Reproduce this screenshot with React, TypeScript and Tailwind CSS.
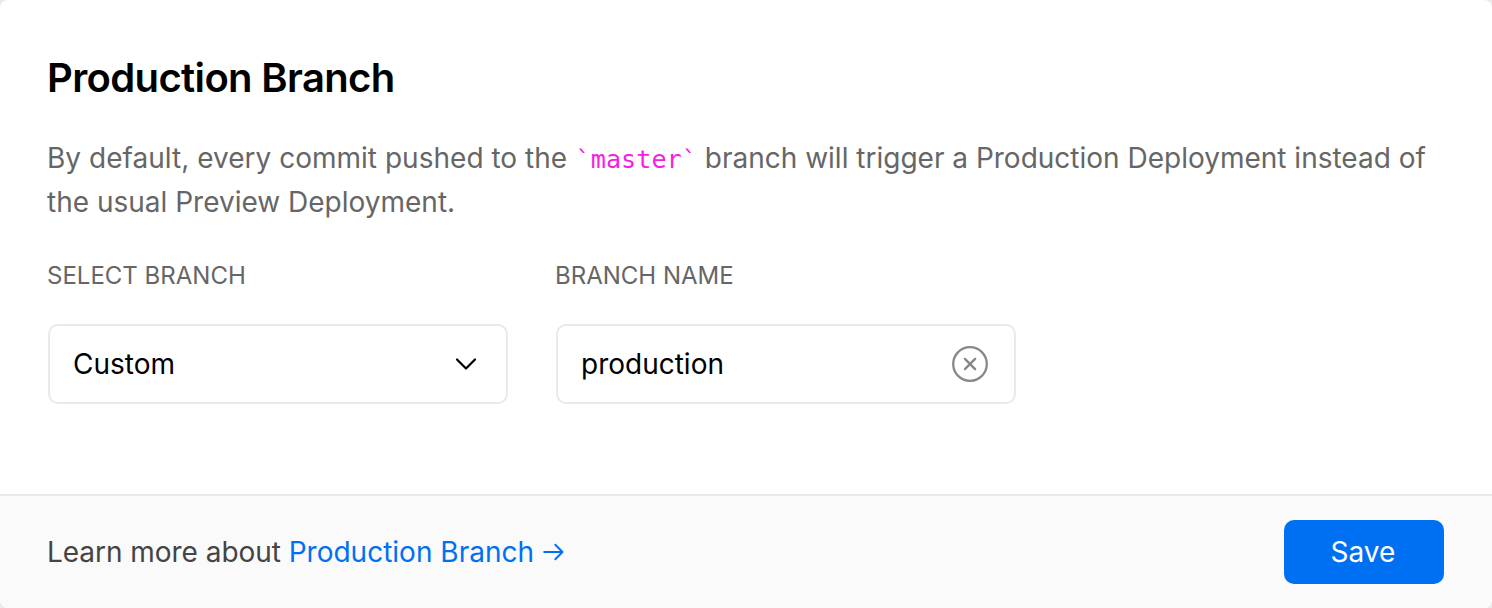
export default function App() {
  return (
    <div className="h-[608px] w-[1492px] overflow-hidden bg-[#eaeaea] font-['Inter',sans-serif] text-[28px] leading-[44px] text-black">
      <section className="flex h-full flex-col overflow-hidden rounded-[8px] bg-white">
        <div className="flex h-[494px] flex-col px-12 pt-12">
          <h2 className="-ml-px h-[60px] text-[40px] font-semibold leading-[60px] tracking-[-0.64px]">Production Branch</h2>
          <p className="mt-7 -ml-px h-[88px] whitespace-nowrap text-[#666]">
            <span className="tracking-[0.02px]">By default, every commit pushed to the </span>
            <code className="ml-[0.5px] font-['DejaVu_Sans_Mono',monospace] text-[25.2px] leading-none text-[#f81ce5]">`master`</code>{" "}
            branch will trigger a Production Deployment instead of
            <br />
            the usual Preview Deployment.
          </p>
          <div className="mt-8 flex gap-12">
            <div className="w-[460px]">
              <div className="-ml-px h-[40px] text-[24px] leading-[40px] text-[#666]">SELECT BRANCH</div>
              <button className="mt-7 flex h-20 w-full items-center justify-between rounded-[10px] border-2 border-[#eaeaea] bg-white pr-7 pl-[23px]">
                <span>Custom</span>
                <svg width="24" height="24" viewBox="0 0 24 24" fill="none" stroke="currentColor" strokeWidth="2.2" strokeLinecap="round" strokeLinejoin="round">
                  <path d="M3 7.5l9 9 9-9" />
                </svg>
              </button>
            </div>
            <div className="w-[460px]">
              <div className="-ml-px h-[40px] text-[24px] leading-[40px] text-[#666]">BRANCH NAME</div>
              <div className="mt-7 flex h-20 w-full items-center justify-between rounded-[10px] border-2 border-[#eaeaea] bg-white pr-[26px] pl-[23px]">
                <span>production</span>
                <svg width="36" height="36" viewBox="0 0 36 36" fill="none" stroke="#888" strokeWidth="2.3" strokeLinecap="round">
                  <circle cx="18" cy="18" r="16.8" />
                  <path d="M12.9 12.9l10.2 10.2M23.1 12.9l-10.2 10.2" strokeWidth="2.4" />
                </svg>
              </div>
            </div>
          </div>
        </div>
        <footer className="flex h-[114px] items-center justify-between border-t-2 border-[#eaeaea] bg-[#fafafa] px-12">
          <p className="-ml-px flex items-center whitespace-pre text-[#444]">
            <span className="tracking-[-0.04px]">Learn more about </span>
            <a className="flex items-center text-[#0070f3]">
              Production Branch
              <svg className="ml-[9px]" width="21" height="20" viewBox="0 0 21 20" fill="none" stroke="currentColor" strokeWidth="2" strokeLinecap="round" strokeLinejoin="round">
                <path d="M1.2 10h18.3M12.3 2.8l7.2 7.2-7.2 7.2" />
              </svg>
            </a>
          </p>
          <button className="h-16 w-40 rounded-[10px] bg-[#0070f3] pr-0.5 text-white">Save</button>
        </footer>
      </section>
    </div>
  );
}
